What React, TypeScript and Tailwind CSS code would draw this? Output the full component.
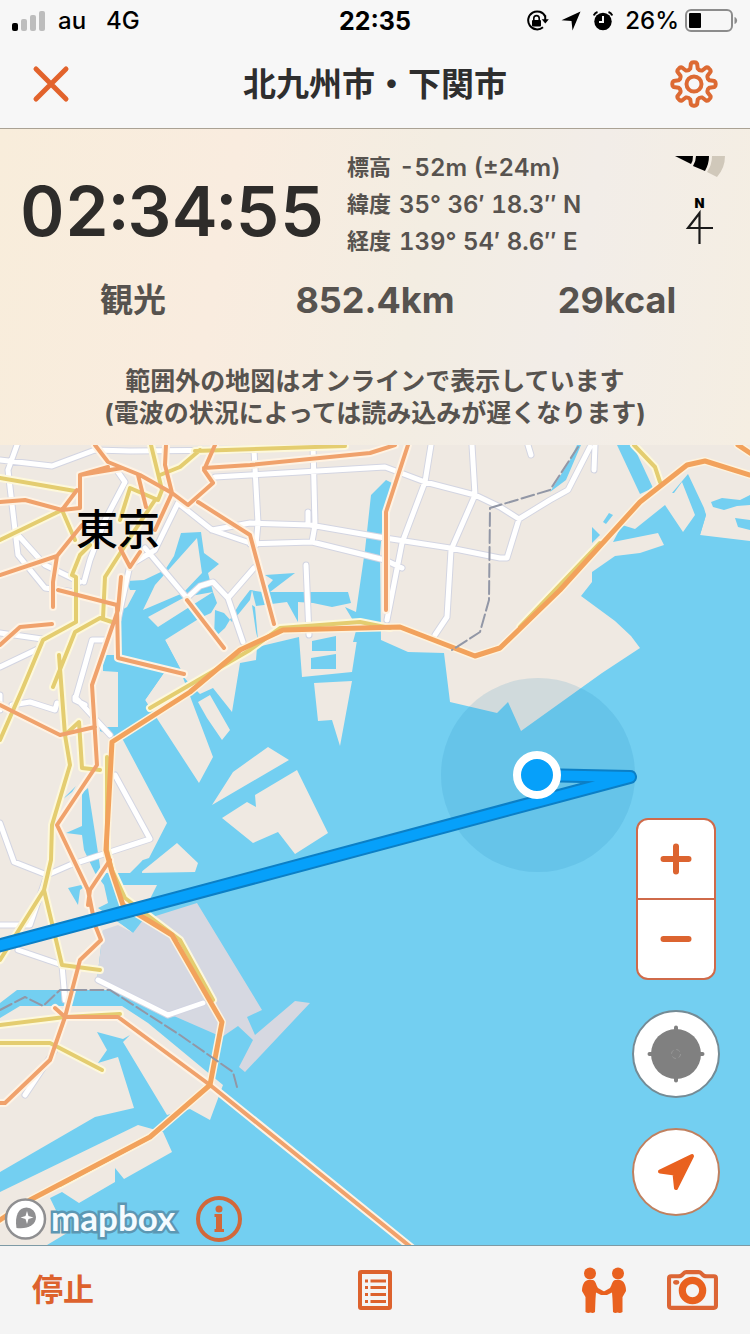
import React from "react";

const FONT = "font-['Inter','Noto_Sans_CJK_JP',sans-serif]";

const LAND = [
  // northern shore, Tokyo to Chiba
  "M0 445H750V541L700 535 706 515 703 508 695 515 683 532 665 505 635 529 622 525 613 542 658 533 664 545 640 553 615 556 592 572V582L581 596 615 621 631 636 640 648 602 673 521 731 508 702 497 713 450 702 444 653 408 652 381 640H357L352 672 302 677 299 637 257 647 256 660 240 663 232 712 213 688 200 694 188 682 182 675 213 757 199 783 145 700 168 667 182 672 165 640 121 608 118 655 103 655V671L118 672V727H100V731L123 740 167 823 149 858 143 860 130 873H110L113 885 157 885 148 903 110 915 133 933 103 930 97 980 120 990H17L0 1003Z",
  "M177 843 198 863 195 872 140 873Z",
  "M198 702 210 695 230 730 222 740 207 718Z",
  "M314 683 352 681 340 746 332 720 318 721Z",
  "M212 805 233 772 268 747 289 760Z",
  "M222 818 247 802 256 807 255 795 297 770 328 833 295 854 278 832 253 843Z",
  "M0 1018 20 1006H122L148 1023 223 1085 210 1120 190 1109 167 1115 123 1042 130 1035 123 1039 97 1032 107 1050 98 1063 118 1057 134 1108 95 1117 0 1172Z",
  "M0 1192 138 1125 163 1132 172 1152 124 1179 115 1168V1182L79 1203 62 1192 50 1198 67 1233 47 1245H0Z",
];

const AIRPORT = [
  "M103 930 118 925 133 933 143 920 197 903 262 1010 247 1017 255 1035 295 1001 310 1003 245 1072 239 1067 253 1040 238 1026 222 1037 167 1013 113 988 97 980Z",
];

const WATER = [
  "M386 480 392 483 383 520 380 553 381 642H353L357 627 345 607 356 612 365 550 371 495Z",
  "M181 533 201 532 204 553 219 564 208 573 213 592 217 603 211 613 200 618 165 640 182 672 168 667 145 700 157 720 140 730 118 727V660L118 612 127 607 136 590 130 590 127 581 144 580 165 570 174 556Z",
  "M215 610 224 613 232 622 250 600 252 590 256 606 287 602 298 622V602L313 603 332 607 351 603 348 592 270 592 295 573 265 575 273 580 262 592 250 590 240 603 225 628 214 638Z",
  "M252 605 255 607 258 640 256 632Z",
  "M312 641 336 636V651H312Z",
  "M311 658 336 654V669H311Z",
  "M617 445H633L653 488 640 494Z",
  "M672 493 688 474 704 508 706 515 700 535 695 515 682 482 674 493Z",
  "M711 502 722 498 740 500 750 495V505L737 506 724 510 713 507Z",
  "M735 518 750 520V530L738 527Z",
  "M603 522 609 513 613 515 606 524Z",
  "M592 527 600 535 592 543Z",
  "M569 462 577 445H581L566 480 550 492Z",
  "M82 793 88 788 95 833 101 873 132 873 143 860 142 873 118 880 120 910 133 932 112 918 98 908 108 903 104 885 95 873 84 850 82 835 66 833 82 826Z",
  "M68 888 90 883 80 890 78 905Z",
  "M62 800 76 786 72 792Z",
];

const QUAYS = [
  "M197 538 202 573 183 593 143 610 155 585Z",
  "M148 617 185 597 213 592 158 627Z",
];

const WHITE_ROADS = [
  "M0 460 52 466 95 450 130 451 250 450M17 445 8 470 15 530 18 555 45 588 75 592M18 535 45 565 80 582M84 582 90 560 105 520 125 482 118 472",
  "M215 477 250 475 385 467 425 482 475 495 500 507 519 519 550 500 568 490 590 447M212 530 250 523 310 525 385 538 450 548 500 558 507 558 519 519M250 544 312 542 385 560 402 568M254 450 258 523 256 545M313 445 315 525 312 542M308 512V525M431 445 425 482 402 543 387 620M472 445 475 495 451 550 447 617 435 635",
  "M178 503 212 530 250 543M178 503 155 550 130 565 118 620M145 548 187 598M187 598 200 586 213 582 228 598 243 642M228 598 254 568M306 565 309 635",
  "M0 667 40 648M0 633 42 639M105 640H92L85 665 75 700 85 705M75 700V697L110 735M0 695V710M12 705 30 702 55 710 57 703",
  "M595 445 594 470M528 445 531 455",
  "M0 823 14 862 47 875 70 865 150 839 115 775M47 875 30 925 0 925M18 950 62 965 65 1000M98 980 168 1015 203 1003M55 1050 25 1095",
];

const YELLOW_ROADS = [
  "M0 478 75 491M0 540 62 510 75 540M151 445 162 490 158 500 130 488 120 520M200 450 180 467 160 475M195 451 345 446M76 622V577L72 575 80 555 90 545M76 622 43 640 22 690 0 740M103 618 105 577 135 530 155 500M112 622 100 618 75 632 53 687M59 655 65 735 70 765 52 825 51 860 44 890 62 965 100 970M65 735 79 722 82 768 100 770M44 890 0 960",
  "M107 757V850L112 870 125 898 180 940 213 1000M150 708 250 650 280 628 360 622 390 628",
  "M0 1025 65 1017 120 1014M0 1043H50L102 1070M60 1185 150 1137M634 445 655 467 660 482M600 543 520 627",
];

const ORANGE_ROADS = [
  "M95 445 108 462 140 475 172 493 188 505 213 483 204 470 215 445M108 467 80 475V508L62 510 25 500 0 502M62 510 77 490M80 475 122 468M166 445 165 465 172 493 155 530M138 475 146 507M204 468 250 465 370 453 395 445",
  "M0 575 57 556 82 525M57 556 53 582V607M58 590 117 605 118 658 184 674M121 577 118 610 92 685 97 765 57 825 88 890 95 925 101 940 80 960 65 1017 50 1060 5 1103H0M0 645 20 627 52 624M0 705 60 735 95 727M120 548 130 567 140 552",
  "M198 502 250 535 274 624M408 445 386 512V610M187 600 224 648",
  "M55 1008 65 1017H118L210 1085 412 1248M110 860 90 890 88 905",
];

const HIGHWAYS = [
  "M106 850 112 742 190 692 240 650 283 630 400 627 475 656 500 648 560 590 640 502 687 465 705 461 750 475M106 850 112 872 123 905 172 935 222 1022 210 1085 150 1137 30 1200 0 1220M738 445 750 453",
];

const RAILS = [
  "M0 1010 25 997 43 1006 60 990 110 990 180 1035 233 1072 237 1087",
  "M578 447 550 490 490 508 489 600 480 632 452 650",
];

function MapDrawing() {
  const line = { fill: "none", strokeLinejoin: "round", strokeLinecap: "round" } as const;
  return (
    <svg
      className="absolute inset-0 h-full w-full"
      viewBox="0 445 750 800"
      preserveAspectRatio="xMidYMid slice"
      role="img"
      aria-label="東京湾の地図"
    >
      <rect x="-1000" y="0" width="3000" height="3000" fill="#73cff1" />
      <path d={LAND.join("")} fill="#efe9e2" />
      <path d={AIRPORT.join("")} fill="#d6d8e1" />
      {WATER.map((d) => (
        <path key={d} d={d} fill="#73cff1" />
      ))}
      <path d={QUAYS.join("")} fill="#efe9e2" />
      <g {...line}>
        <path d={WHITE_ROADS.join("")} stroke="#d3d5e2" strokeWidth="7" />
        <path d={WHITE_ROADS.join("")} stroke="#ffffff" strokeWidth="5" />
        <path d={YELLOW_ROADS.join("")} stroke="#fdf8dc" strokeWidth="8" />
        <path d={ORANGE_ROADS.join("")} stroke="#fef3e4" strokeWidth="8" />
        <path d={HIGHWAYS.join("")} stroke="#fef3dd" strokeWidth="8" />
        <path d={YELLOW_ROADS.join("")} stroke="#e4cd70" strokeWidth="4" />
        <path d={ORANGE_ROADS.join("")} stroke="#f0a26c" strokeWidth="4" />
        <path d={HIGHWAYS.join("")} stroke="#f2a25c" strokeWidth="5" />
        <path d={RAILS.join("")} stroke="#9297a6" strokeWidth="2" strokeDasharray="13 4" />
      </g>
      <text
        x="76"
        y="545"
        fontSize="42"
        className="font-['Noto_Sans_CJK_JP',sans-serif] font-medium"
        fill="#000"
      >
        東京
      </text>
      <circle cx="538" cy="775" r="97" fill="#2088bb" fillOpacity="0.15" />
      <g {...line}>
        <path d="M-10 948 630 777 538 775" stroke="#0b7fc6" strokeWidth="14" />
        <path d="M-10 948 630 777 538 775" stroke="#06a0fa" strokeWidth="10" />
      </g>
      <circle cx="537" cy="775" r="20" fill="#06a0fa" stroke="#fff" strokeWidth="8" />
    </svg>
  );
}

function gearOutline() {
  const at = (r: number, a: number) =>
    `${(24 + r * Math.sin(a)).toFixed(2)} ${(24 - r * Math.cos(a)).toFixed(2)}`;
  let d = "";
  for (let i = 0; i < 8; i++) {
    const a = (i * Math.PI) / 4;
    d += `${i ? "L" : "M"}${at(15.8, a - 0.24)}L${at(20.6, a - 0.15)}Q${at(22, a - 0.1)} ${at(21.6, a)}`;
    d += `Q${at(22, a + 0.1)} ${at(20.6, a + 0.15)}L${at(15.8, a + 0.24)}`;
    d += `Q${at(14, a + Math.PI / 8)} ${at(15.8, a + Math.PI / 4 - 0.24)}`;
  }
  return d + "Z";
}

function StatusBar() {
  return (
    <div className="grid h-10 grid-cols-[1fr_auto_1fr] items-center px-3 pt-px text-2xl leading-6 font-medium text-black">
      <div className="flex items-center">
        <svg width="34" height="22" viewBox="0 0 34 22" aria-hidden="true">
          <rect x="0" y="13" width="6" height="8" rx="2" />
          <g fill="#bdbdbd">
            <rect x="9" y="9" width="6" height="12" rx="2" />
            <rect x="18" y="5" width="6" height="16" rx="2" />
            <rect x="27" y="1" width="6" height="20" rx="2" />
          </g>
        </svg>
        <span className="ml-3">au</span>
        <span className="ml-5">4G</span>
      </div>
      <span className="text-[25px] font-bold">22:35</span>
      <div className="flex items-center justify-end">
        <svg width="23" height="22" viewBox="0 0 23 22" className="mr-3" aria-hidden="true">
          <path d="M19.3 6.5A9 9 0 1 0 17 17.3" fill="none" stroke="#000" strokeWidth="2" />
          <path d="M19.2 5.5V10" stroke="#000" strokeWidth="2" />
          <path d="M15.7 9.3H22.8L19.3 13.6Z" />
          <rect x="6" y="10" width="9" height="6.5" rx="1" />
          <path d="M7.8 10.5V8.3a2.7 2.7 0 0 1 5.4 0v2.2" fill="none" stroke="#000" strokeWidth="1.6" />
        </svg>
        <svg width="20" height="20" viewBox="0 0 20 20" className="mr-3" aria-hidden="true">
          <path d="M19.5.5 11.5 19.5 10.5 10 .5 9.3Z" />
        </svg>
        <svg width="20" height="20" viewBox="0 0 20 20" className="mr-3" aria-hidden="true">
          <circle cx="10" cy="10.5" r="8.7" />
          <path d="M.8 4.5A6 6 0 0 1 4.5 1M19.2 4.5A6 6 0 0 0 15.5 1" stroke="#000" strokeWidth="2" fill="none" />
          <path d="M10 5V11H6" stroke="#f7f7f7" strokeWidth="2" fill="none" />
        </svg>
        <span>26%</span>
        <svg width="53" height="24" viewBox="0 0 53 24" className="ml-1.5" aria-hidden="true">
          <rect x="1" y="1" width="46" height="21" rx="5" fill="none" stroke="#8c8c8c" strokeWidth="2" />
          <rect x="4" y="4" width="12" height="15" rx="1" />
          <path d="M49.5 8C53 9 53 14 49.5 15Z" fill="#8c8c8c" />
        </svg>
      </div>
    </div>
  );
}

function Header() {
  return (
    <header className="border-b border-[#aaa294] bg-[#f7f7f7]">
      <StatusBar />
      <div className="grid h-22 grid-cols-[1fr_auto_1fr] items-center px-8">
        <button type="button" aria-label="閉じる" className="justify-self-start">
          <svg width="38" height="38" viewBox="0 0 38 38">
            <path d="M4 4 34 34M34 4 4 34" stroke="#e2632c" strokeWidth="5" strokeLinecap="round" />
          </svg>
        </button>
        <h1 className="text-[33px] leading-10 font-bold text-[#2e2e2e]">北九州市・下関市</h1>
        <button type="button" aria-label="設定" className="justify-self-end">
          <svg width="48" height="48" viewBox="0 0 48 48" fill="none" stroke="#dd6a33" strokeWidth="4" strokeLinejoin="round">
            <path d={gearOutline()} />
            <circle cx="24" cy="24" r="7.5" />
          </svg>
        </button>
      </div>
    </header>
  );
}

function Instruments() {
  return (
    <div className="flex flex-col items-center gap-4">
      <svg width="52" height="24" viewBox="0 0 52 24" aria-label="GPS 信号">
        <path d="M1 1H19Q19 6 17 9Z" />
        <path d="M22 1H35Q35 9 31 16L19 11Q22 6 22 1Z" />
        <path d="M38 1H51Q51 13 43 22L33 17Q38 10 38 1Z" fill="#d0c8ba" />
      </svg>
      <svg width="30" height="50" viewBox="0 0 30 50" aria-label="北">
        <text x="14.5" y="13" textAnchor="middle" fontSize="13" className="font-['Inter',sans-serif] font-black" fill="#000">
          N
        </text>
        <path d="M14.5 49V18L3 33H28" fill="none" stroke="#1a1a1a" strokeWidth="2.2" />
      </svg>
    </div>
  );
}

function TrackPanel() {
  return (
    <section className="bg-[linear-gradient(100deg,#f8eddb_0%,#f9ecdf_30%,#f3ede2_55%,#f2ede8_75%,#f5eee2_100%)] pt-5 text-[#57534f]">
      <div className="flex justify-between pr-6 pl-5">
        <div className="flex items-center">
          <time className="w-[327px] pt-3 text-[69px] leading-[72px] font-semibold whitespace-nowrap text-[#2e2c2a] tabular-nums">
            02:34:55
          </time>
          <dl className="leading-[37px] whitespace-nowrap">
            {[
              ["標高", "-52m (±24m)"],
              ["緯度", "35° 36′ 18.3″ N"],
              ["経度", "139° 54′ 8.6″ E"],
            ].map(([name, value]) => (
              <div key={name} className="flex gap-2">
                <dt className="text-[22px] font-bold">{name}</dt>
                <dd className="text-[24px] font-semibold tabular-nums">{value}</dd>
              </div>
            ))}
          </dl>
        </div>
        <div className="pt-1.5">
          <Instruments />
        </div>
      </div>
      <div className="mt-5 grid grid-cols-3 px-3 text-center leading-10 font-bold">
        <span className="text-[33px]">観光</span>
        <span className="text-[36px]">852.4km</span>
        <span className="text-[36px]">29kcal</span>
      </div>
      <p className="mt-[45px] pb-4 text-center text-[25px] leading-8 font-bold">
        範囲外の地図はオンラインで表示しています
        <br />
        (電波の状況によっては読み込みが遅くなります)
      </p>
    </section>
  );
}

function MapControls() {
  return (
    <div className="absolute right-[30px] bottom-[29px] flex w-[88px] flex-col items-center gap-[30px]">
      <div className="flex w-20 flex-col divide-y-2 divide-[#cf6a4a] overflow-hidden rounded-xl border-2 border-[#cf6a4a] bg-white">
        <button type="button" aria-label="拡大" className="flex h-[80px] items-center justify-center">
          <svg width="32" height="32" viewBox="0 0 32 32">
            <path d="M16 3.5V28.5M3.5 16H28.5" stroke="#dc6430" strokeWidth="6" strokeLinecap="round" />
          </svg>
        </button>
        <button type="button" aria-label="縮小" className="flex h-[78px] items-center justify-center">
          <svg width="32" height="32" viewBox="0 0 32 32">
            <path d="M3.5 16H28.5" stroke="#dc6430" strokeWidth="6" strokeLinecap="round" />
          </svg>
        </button>
      </div>
      <button
        type="button"
        aria-label="地図の中心"
        className="flex h-[88px] w-[88px] items-center justify-center rounded-full border-2 border-[#758b95] bg-white"
      >
        <svg width="58" height="58" viewBox="0 0 58 58">
          <circle cx="29" cy="29" r="25" fill="#808080" />
          <path d="M29 2.5V55.5M2.5 29H55.5" stroke="#808080" strokeWidth="4" strokeLinecap="round" />
          <circle cx="29" cy="29" r="4.5" fill="none" stroke="#979797" strokeDasharray="4 3" />
        </svg>
      </button>
      <button
        type="button"
        aria-label="現在地"
        className="flex h-[88px] w-[88px] items-center justify-center rounded-full border-2 border-[#c0805f] bg-white"
      >
        <svg width="40" height="40" viewBox="0 0 40 40">
          <path d="M36 4 20 36 18.5 21.5 4 19.5Z" fill="#e9611f" stroke="#e9611f" strokeWidth="4" strokeLinejoin="round" />
        </svg>
      </button>
    </div>
  );
}

function Attribution() {
  return (
    <div className="absolute bottom-0.5 left-1 flex items-center">
      <a href="#mapbox" className="flex items-center gap-1">
        <svg width="43" height="44" viewBox="0 0 42 44" aria-hidden="true">
          <circle cx="21" cy="22" r="19.5" fill="#fff" stroke="#8f8f91" strokeWidth="2.5" />
          <path d="M12 31C10 19 14 10.5 22 10.5A9.5 9.5 0 0 1 31.5 20C31.5 28 23 32.5 12 31Z" fill="#8f8f91" />
          <path d="M22.5 14 24 19 29 20.5 24 22 22.5 27 21 22 16 20.5 21 19Z" fill="#fff" />
        </svg>
        <span className="pb-1 font-['Lato',sans-serif] text-[35px] leading-10 font-bold text-[#f4fbff] [-webkit-text-stroke:5px_#5c97b3] [paint-order:stroke_fill]">
          mapbox
        </span>
      </a>
      <button type="button" aria-label="地図の情報" className="ml-5">
        <svg width="48" height="48" viewBox="0 0 48 48">
          <circle cx="24" cy="24" r="21" fill="none" stroke="#d2683a" strokeWidth="4" />
          <circle cx="24" cy="14" r="3.5" fill="#d2683a" />
          <path d="M19.5 19H27V34H29V37H19.5V34H21V22H19.5Z" fill="#d2683a" />
        </svg>
      </button>
    </div>
  );
}

function Toolbar() {
  return (
    <footer className="grid h-[89px] grid-cols-[1fr_auto_1fr] items-center border-t border-[#7d9aa5] bg-[#f4f4f4] px-8 text-[#dd622d]">
      <button type="button" className="justify-self-start text-[31px] leading-10 font-bold">
        停止
      </button>
      <button type="button" aria-label="記録一覧">
        <svg width="34" height="40" viewBox="0 0 34 40" fill="none" stroke="currentColor">
          <rect x="2" y="2" width="30" height="36" rx="1" strokeWidth="4" />
          <path d="M12.5 11H28M12.5 17.5H28M12.5 24.5H28M12.5 31.5H28" strokeWidth="3" />
          <path d="M7 11H10M7 17.5H10M7 24.5H10M7 31.5H10" strokeWidth="3" />
        </svg>
      </button>
      <div className="flex items-center gap-10 justify-self-end">
        <button type="button" aria-label="仲間">
          <svg width="46" height="48" viewBox="0 0 46 48" fill="#e9611f">
            <circle cx="9" cy="7.5" r="6" />
            <path d="M7 14H12C15 15 15 19 17 22L24 26V29H20L15 26.5 14.5 33 14 46Q12 47.5 9.5 46.5 7 47.5 4.5 46V31L1 25C1 19 3 15 7 14Z" />
            <circle cx="37" cy="7.5" r="6" />
            <path d="M39 14H34C31 15 31 19 29 22L22 26 24 29H26L31 26.5 31.5 33 32 46Q34 47.5 36.5 46.5 39 47.5 41.5 46V31L45 25C45 19 43 15 39 14Z" />
          </svg>
        </button>
        <button type="button" aria-label="カメラ">
          <svg width="51" height="40" viewBox="0 0 50 39" fill="none" stroke="#dc6535">
            <path
              d="M4 6H11Q14 6 15.5 4 17 2 19 2H31Q33 2 34.500 4 36 6 39 6H46Q48 6 48 8V35Q48 37 46 37H4Q2 37 2 35V8Q2 6 4 6Z"
              strokeWidth="4"
            />
            <circle cx="25" cy="20" r="10" stroke="#e9611f" strokeWidth="7" />
            <ellipse cx="9" cy="12" rx="3" ry="2.3" fill="#dc6535" stroke="none" />
          </svg>
        </button>
      </div>
    </footer>
  );
}

export default function App() {
  return (
    <div className={`flex min-h-screen flex-col ${FONT}`}>
      <Header />
      <TrackPanel />
      <main className="relative min-h-96 flex-1 overflow-hidden">
        <MapDrawing />
        <MapControls />
        <Attribution />
      </main>
      <Toolbar />
    </div>
  );
}
